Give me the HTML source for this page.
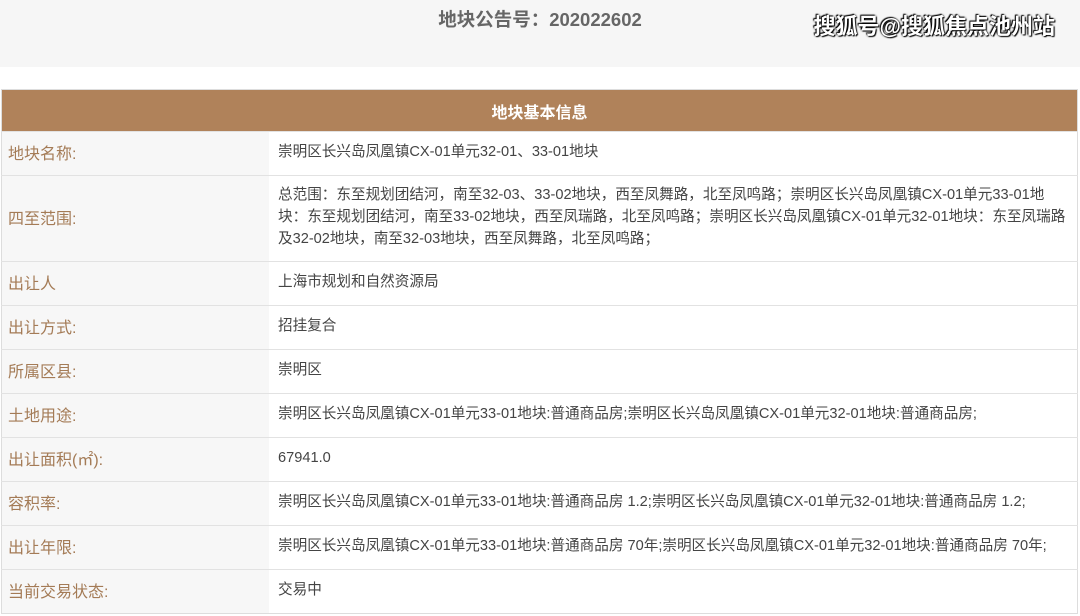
<!DOCTYPE html>
<html><head><meta charset="utf-8"><style>
body{margin:0;width:1080px;height:616px;background:#fff;font-family:"Liberation Sans","Noto Sans CJK SC",sans-serif;overflow:hidden;position:relative}
.top{position:absolute;left:0;top:0;width:1080px;height:67px;background:#f6f6f6}
.title{position:absolute;left:0;width:1080px;top:6px;text-align:center;font-size:18.5px;font-weight:bold;color:#666}
.wm{position:absolute;right:25px;top:9px;font-size:22px;font-weight:bold;color:#fff;text-shadow:0 0 2px #000,1px 1px 1px #000,-1px -1px 1px #000}
table{position:absolute;left:1px;top:89px;width:1077px;border-collapse:collapse;border:1px solid #ddd}
th{background:#b0825a;color:#fff;height:41px;font-size:16px;font-weight:bold;padding:0}
td{border-top:1px solid #e2e2e2;padding:0 8px 3px;height:40px}
td.l{width:253px;background:#f7f7f7;color:#a47b56;font-size:16px;padding-left:6px}
td.v{color:#444;font-size:14.6px;line-height:22px;padding-left:9px}
</style></head><body>
<div class="top"></div>
<div class="title">地块公告号：202022602</div>
<div class="wm">搜狐号@搜狐焦点池州站</div>
<table>
<tr><th colspan="2">地块基本信息</th></tr>
<tr><td class="l">地块名称:</td><td class="v">崇明区长兴岛凤凰镇CX-01单元32-01、33-01地块</td></tr>
<tr><td class="l" style="height:82px">四至范围:</td><td class="v">总范围：东至规划团结河，南至32-03、33-02地块，西至凤舞路，北至凤鸣路；崇明区长兴岛凤凰镇CX-01单元33-01地块：东至规划团结河，南至33-02地块，西至凤瑞路，北至凤鸣路；崇明区长兴岛凤凰镇CX-01单元32-01地块：东至凤瑞路及32-02地块，南至32-03地块，西至凤舞路，北至凤鸣路；</td></tr>
<tr><td class="l">出让人</td><td class="v">上海市规划和自然资源局</td></tr>
<tr><td class="l">出让方式:</td><td class="v">招挂复合</td></tr>
<tr><td class="l">所属区县:</td><td class="v">崇明区</td></tr>
<tr><td class="l">土地用途:</td><td class="v">崇明区长兴岛凤凰镇CX-01单元33-01地块:普通商品房;崇明区长兴岛凤凰镇CX-01单元32-01地块:普通商品房;</td></tr>
<tr><td class="l">出让面积(㎡):</td><td class="v">67941.0</td></tr>
<tr><td class="l">容积率:</td><td class="v">崇明区长兴岛凤凰镇CX-01单元33-01地块:普通商品房 1.2;崇明区长兴岛凤凰镇CX-01单元32-01地块:普通商品房 1.2;</td></tr>
<tr><td class="l">出让年限:</td><td class="v">崇明区长兴岛凤凰镇CX-01单元33-01地块:普通商品房 70年;崇明区长兴岛凤凰镇CX-01单元32-01地块:普通商品房 70年;</td></tr>
<tr><td class="l">当前交易状态:</td><td class="v">交易中</td></tr>
</table>
</body></html>
